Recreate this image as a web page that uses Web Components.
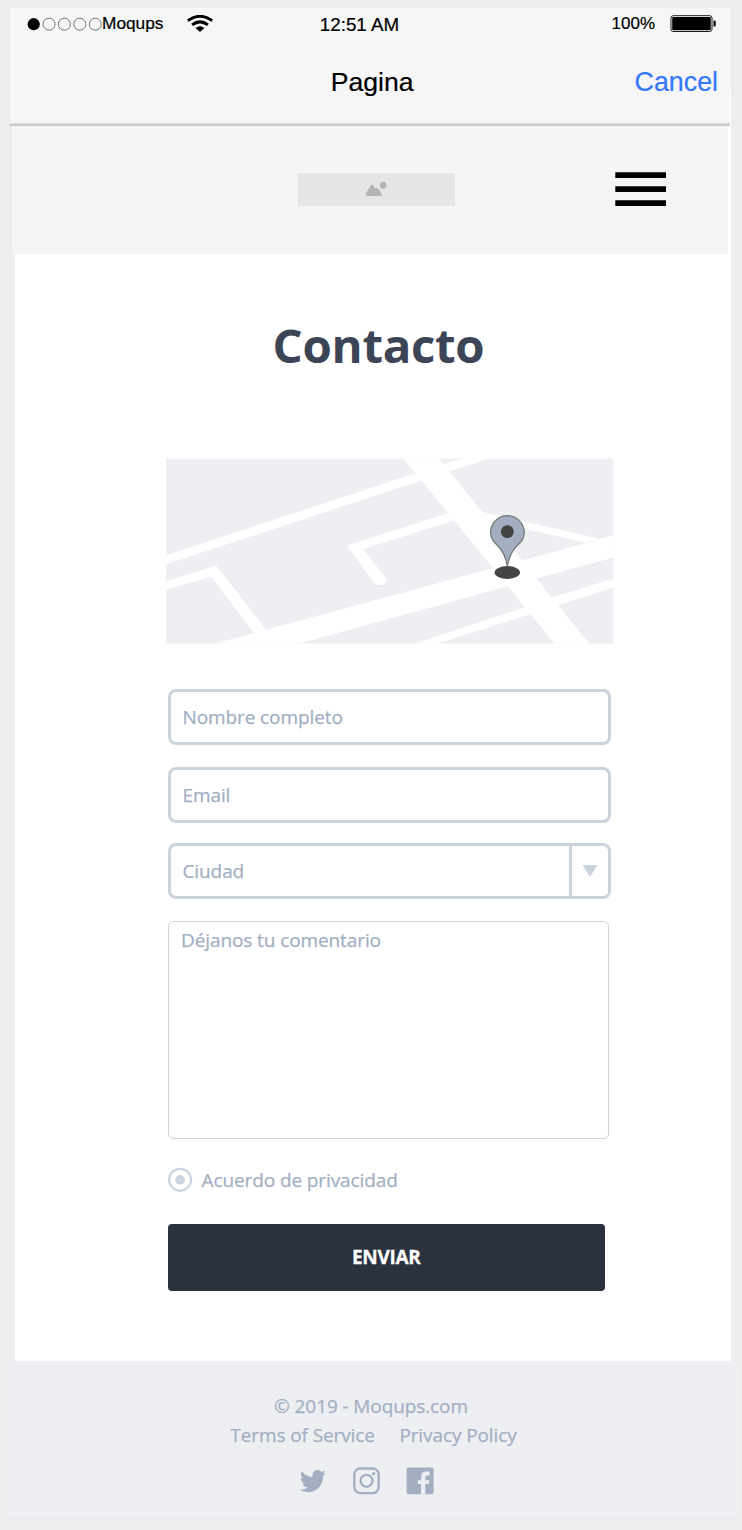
<!DOCTYPE html>
<html lang="es">
<head>
<meta charset="utf-8">
<title>Contacto</title>
<style>
  html, body { margin: 0; background: #ededed; }
  body { font-family: "Open Sans", "Noto Sans", sans-serif; color: #a2afc3; }
</style>
</head>
<body>
<contact-page></contact-page>

<script>
function define(name, markup) {
  const template = document.createElement('template');
  template.innerHTML = markup;
  customElements.define(name, class extends HTMLElement {
    constructor() {
      super();
      this.attachShadow({ mode: 'open' }).append(template.content.cloneNode(true));
    }
  });
}

define('status-bar', `
<style>
  :host { display: grid; grid-template-columns: 309px 81px 1fr; height: 32px; color: #000;
    font-family: "Liberation Sans", Arial, sans-serif; white-space: nowrap; -webkit-text-stroke: .2px #000; }
  .left, .right { display: flex; align-items: center; height: 31px; font-size: 17.3px; line-height: 31px; }
  .left svg { display: block; flex: none; }
  .dots { margin-left: 17px; }
  .carrier { width: 85px; }
  .time { text-align: center; font-size: 18.8px; line-height: 33px; }
  .right { font-size: 17px; justify-content: flex-end; padding-right: 12.5px; }
  .right svg { display: block; margin-left: 15px; }
</style>
<div class="left">
  <svg class="dots" width="75" height="14" viewBox="0 0 75 14">
    <circle cx="6.7" cy="7.2" r="6.1"/>
    <g fill="none" stroke="#333" stroke-width=".65">
      <circle cx="22" cy="7.2" r="6"/><circle cx="37.4" cy="7.2" r="6"/>
      <circle cx="52.8" cy="7.2" r="6"/><circle cx="68.3" cy="7.2" r="6"/>
    </g>
  </svg>
  <span class="carrier">Moqups</span>
  <svg width="26" height="18" viewBox="0 0 26 18" fill="none" stroke="#000" stroke-width="3">
    <path d="M.9 5.8Q13 -3.2 25.1 5.8"/><path d="M5.1 9.9Q13 3.8 20.9 9.9"/>
    <path d="M8.6 12.9Q13 9.5 17.4 12.9L13 17.1Z" fill="#000" stroke="none"/>
  </svg>
</div>
<div class="time">12:51 AM</div>
<div class="right">
  <span>100%</span>
  <svg width="47" height="18" viewBox="0 0 47 18">
    <rect x="1" y=".7" width="41" height="15.8" rx="2.3" fill="#fff" stroke="#000" stroke-width=".9"/>
    <rect x="2.2" y="1.9" width="38.6" height="13.4" rx="1.2"/>
    <path d="M43.5 5.5h1q1.2 0 1.2 1.2v3.6q0 1.2-1.2 1.2h-1z"/>
  </svg>
</div>`);

define('nav-bar', `
<style>
  :host { display: grid; grid-template-columns: 1fr 84px 1fr; height: 82px; align-items: start;
    font: 26.6px/84px "Liberation Sans", Arial, sans-serif; color: #000; white-space: nowrap;
    -webkit-text-stroke: .2px currentColor; }
  .title { padding-left: 3px; padding-top: 1px; line-height: 83px; }
  .action { text-align: right; color: #3478fa; -webkit-text-stroke: .2px #3478fa; padding-right: 11.5px; font-size: 26.8px; }
</style>
<span></span><span class="title"><slot></slot></span>
<span class="action"><slot name="action"></slot></span>`);

define('app-header', `
<style>
  :host { display: flex; flex-direction: column; }
  .top { width: 719.5px; margin-left: 10px; height: 114.5px; background: #f6f6f6; }
  .rule { height: 3.5px; width: 719.5px; margin-left: 10px;
    background: linear-gradient(#dddddf 0 .6px, #c8c8cb .6px); }
  .brand { display: flex; align-items: center; width: 716px; height: 128px; margin-left: 12px; background: #f5f5f5; }
  .logo { width: 157px; height: 33px; margin-left: 285.7px; background: #e6e6e6;
    display: flex; align-items: center; justify-content: center; margin-bottom: 2px; }
  .menu { margin-left: 160.5px; margin-bottom: 2px; display: block; }
</style>
<div class="top">
  <status-bar></status-bar>
  <nav-bar>Pagina<span slot="action">Cancel</span></nav-bar>
</div>
<div class="rule"></div>
<div class="brand">
  <div class="logo">
    <svg width="22" height="16" viewBox="0 0 22 16" fill="#b3b3b3">
      <circle cx="18.2" cy="4.3" r="3.4"/>
      <path d="M1.2 12 5.6 4.8Q7 2.8 8.4 4.8L9.9 7.4Q12 5.9 13.5 8L16.5 12.7Q17.7 15 15.8 15H3Q-.2 15 1.2 12Z"/>
    </svg>
  </div>
  <svg class="menu" width="51" height="35" viewBox="0 0 51 35">
    <path d="M.3 .3h50.7v5.7H.3zM.3 14.3h50.7v5.7H.3zM.3 28.3h50.7v5.7H.3z"/>
  </svg>
</div>`);

define('street-map', `
<style>:host, svg { display: block; width: 448px; height: 186px; }</style>
<svg viewBox="166 458 448 186">
  <path fill="#eeeff3" d="M166 458.5h447.3v185H166z"/>
  <g fill="#fff">
    <path d="M166 555.3 400 478.3 467 457 494 457 400 487.6 166 564.3Z"/>
    <path d="M403.5 458.5H439L589 643.5H554.5Z"/>
    <path d="M347 545.5 447.5 513.3 454 520.5 363.5 549 386 578.5Q388 584 380.5 585 375 585 372.5 580.5Z"/>
    <path d="M166 581.3 216 565.5 267 631 254.5 633.5 211 576.5 166 590Z"/>
    <path d="M215 643.5 266 629.8 400 593.5 613.5 535.5V557.5L299 643.5Z"/>
    <path d="M481.7 511.7 600 539 586 542.8 490 521Z"/>
    <path d="M415 643.5 524 607.5 552.5 597.5 613.5 578.5V587.5L438 643.5Z"/>
  </g>
  <ellipse cx="507.3" cy="572.5" rx="12.7" ry="6.5" fill="#444"/>
  <path fill="#a2afc3" stroke="#777" stroke-width="1.3" d="M507.3 566C506 558 502.5 550 497 545 493 541.5 490.6 537.5 490.6 532.5A16.8 16.8 0 0 1 524.2 532.5C524.2 537.5 521.5 542 517.5 545.3 512 550 509 558 507.3 566Z"/>
  <circle cx="507.3" cy="531.6" r="6.4" fill="#444"/>
</svg>`);

define('text-field', `
<style>
  :host { display: flex; box-sizing: border-box; width: 443px; height: 56px;
    border: 3px solid #cbd4de; border-radius: 8px; background: #fff; font-size: 19px; line-height: 51px; }
  .value { flex: 1; padding-left: 11.5px; }
  .toggle { display: none; }
  :host([select]) .toggle { display: flex; width: 36.5px; border-left: 3px solid #cbd4de;
    align-items: center; justify-content: center; }
</style>
<span class="value"><slot></slot></span>
<span class="toggle"><svg width="16" height="12" viewBox="0 0 16 12"><path d="M.5 0h15L8 12z" fill="#cbd4de"/></svg></span>`);

define('comment-area', `
<style>
  :host { display: block; box-sizing: border-box; width: 441px; height: 218px; border: 1.5px solid #cbd4de;
    border-radius: 5px; padding: 3px 12px; background: #fff; font-size: 19px; line-height: 30px; }
</style><slot></slot>`);

define('radio-option', `
<style>
  :host { display: flex; align-items: center; height: 25px; gap: 9px; font-size: 19px; line-height: 27px; }
  svg { display: block; }
  span { padding-top: 2px; }
</style>
<svg width="24.5" height="25" viewBox="0 0 24.5 25">
  <circle cx="12.1" cy="12.8" r="11" fill="none" stroke="#cbd4de" stroke-width="2.2"/>
  <circle cx="12.1" cy="12.8" r="4.8" fill="#cbd4de"/>
</svg>
<span><slot></slot></span>`);

define('submit-button', `
<style>
  :host { display: block; width: 436.5px; height: 67.5px; border-radius: 4px; background: #2b313d; color: #fff;
    font-weight: 700; font-size: 19px; line-height: 66px; text-align: center; letter-spacing: -.3px;
    -webkit-text-stroke: .3px #fff; }
</style><slot></slot>`);

define('contact-form', `
<style>
  :host { display: flex; flex-direction: column; width: 448px; letter-spacing: -.1px; }
  h1 { margin: 0 0 78px; width: 425px; text-align: center; color: #3c4556; letter-spacing: -.3px;
    font-size: 47.4px; line-height: 71px; font-weight: 700; }
  street-map { margin-bottom: 45px; }
  .fields { display: flex; flex-direction: column; margin-left: 2px; -webkit-text-stroke: .25px #a2afc3; }
</style>
<h1>Contacto</h1>
<street-map></street-map>
<div class="fields">
  <text-field style="margin-bottom:22px">Nombre completo</text-field>
  <text-field style="margin-bottom:20px">Email</text-field>
  <text-field select style="margin-bottom:22px">Ciudad</text-field>
  <comment-area style="margin-bottom:28px">Déjanos tu comentario</comment-area>
  <radio-option style="margin-bottom:31.5px">Acuerdo de privacidad</radio-option>
  <submit-button>ENVIAR</submit-button>
</div>`);

define('site-footer', `
<style>
  :host { display: flex; flex-direction: column; box-sizing: border-box; width: 732.5px; height: 155.5px;
    margin-left: 6px; padding-top: 31px; background: #eeeff3; font-size: 19px; line-height: 29px; white-space: nowrap;
    letter-spacing: -.1px; -webkit-text-stroke: .25px #a2afc3; }
  .copy { width: 730px; text-align: center; }
  .links { display: flex; gap: 24.5px; justify-content: center; width: 735px; }
  .social { display: flex; gap: 26.5px; margin: 17px 0 0 293px; }
  svg { display: block; }
</style>
<div class="copy">© 2019 - Moqups.com</div>
<div class="links"><span>Terms of Service</span><span>Privacy Policy</span></div>
<div class="social">
  <svg width="27" height="28" viewBox="0 0 27 28" fill="#a2afc3">
    <g transform="translate(.8 .6) scale(1.08 1.13)"><path d="M23.95 4.57a10 10 0 01-2.82.78 4.96 4.96 0 002.16-2.72c-.95.55-2 .96-3.13 1.18a4.92 4.92 0 00-8.38 4.48C7.69 8.1 4.07 6.13 1.64 3.16a4.93 4.93 0 001.52 6.57 4.9 4.9 0 01-2.23-.61v.06a4.92 4.92 0 003.95 4.83 5 5 0 01-2.21.08 4.94 4.94 0 004.6 3.42A9.87 9.87 0 010 19.54a13.99 13.99 0 007.55 2.21c9.05 0 14-7.5 14-13.98 0-.21 0-.42-.02-.63a9.94 9.94 0 002.46-2.55z"/></g>
  </svg>
  <svg width="27" height="28" viewBox="0 0 27 28" fill="none" stroke="#a2afc3" stroke-width="2.3">
    <rect x="1.3" y="1.5" width="24.4" height="24.6" rx="6"/>
    <circle cx="13.5" cy="13.8" r="6"/>
    <circle cx="20.6" cy="6.6" r="1.7" fill="#a2afc3" stroke="none"/>
  </svg>
  <svg width="28" height="28" viewBox="0 0 28 28">
    <rect x=".6" y=".4" width="27" height="26.8" rx="2" fill="#a2afc3"/>
    <path fill="#eeeff3" d="M15.1 27.3V17H11.9V13.2H15.1V10Q15.1 4.5 20.1 4.5H23.5V8.5H21.1Q19.3 8.5 19.3 10.4V13.2H23.5L22.8 17H19.3V27.3Z"/>
  </svg>
</div>`);

define('contact-page', `
<style>
  :host { display: grid; width: 742px; height: 1530px; box-sizing: border-box;
    grid-template-columns: 742px; grid-template-rows: 8px 82px 164px 1107px 155.5px 1fr; overflow: hidden; }
  app-header { grid-area: 2 / 1 / 4 / 2; z-index: 1; }
  main { grid-area: 3 / 1 / 5 / 2; box-sizing: border-box; width: 716px; margin-left: 15px;
    padding: 219px 0 0 151px; background: #fff; }
  site-footer { grid-area: 5 / 1 / 6 / 2; z-index: 1; }
</style>
<app-header></app-header>
<main><contact-form></contact-form></main>
<site-footer></site-footer>`);
</script>
</body>
</html>
